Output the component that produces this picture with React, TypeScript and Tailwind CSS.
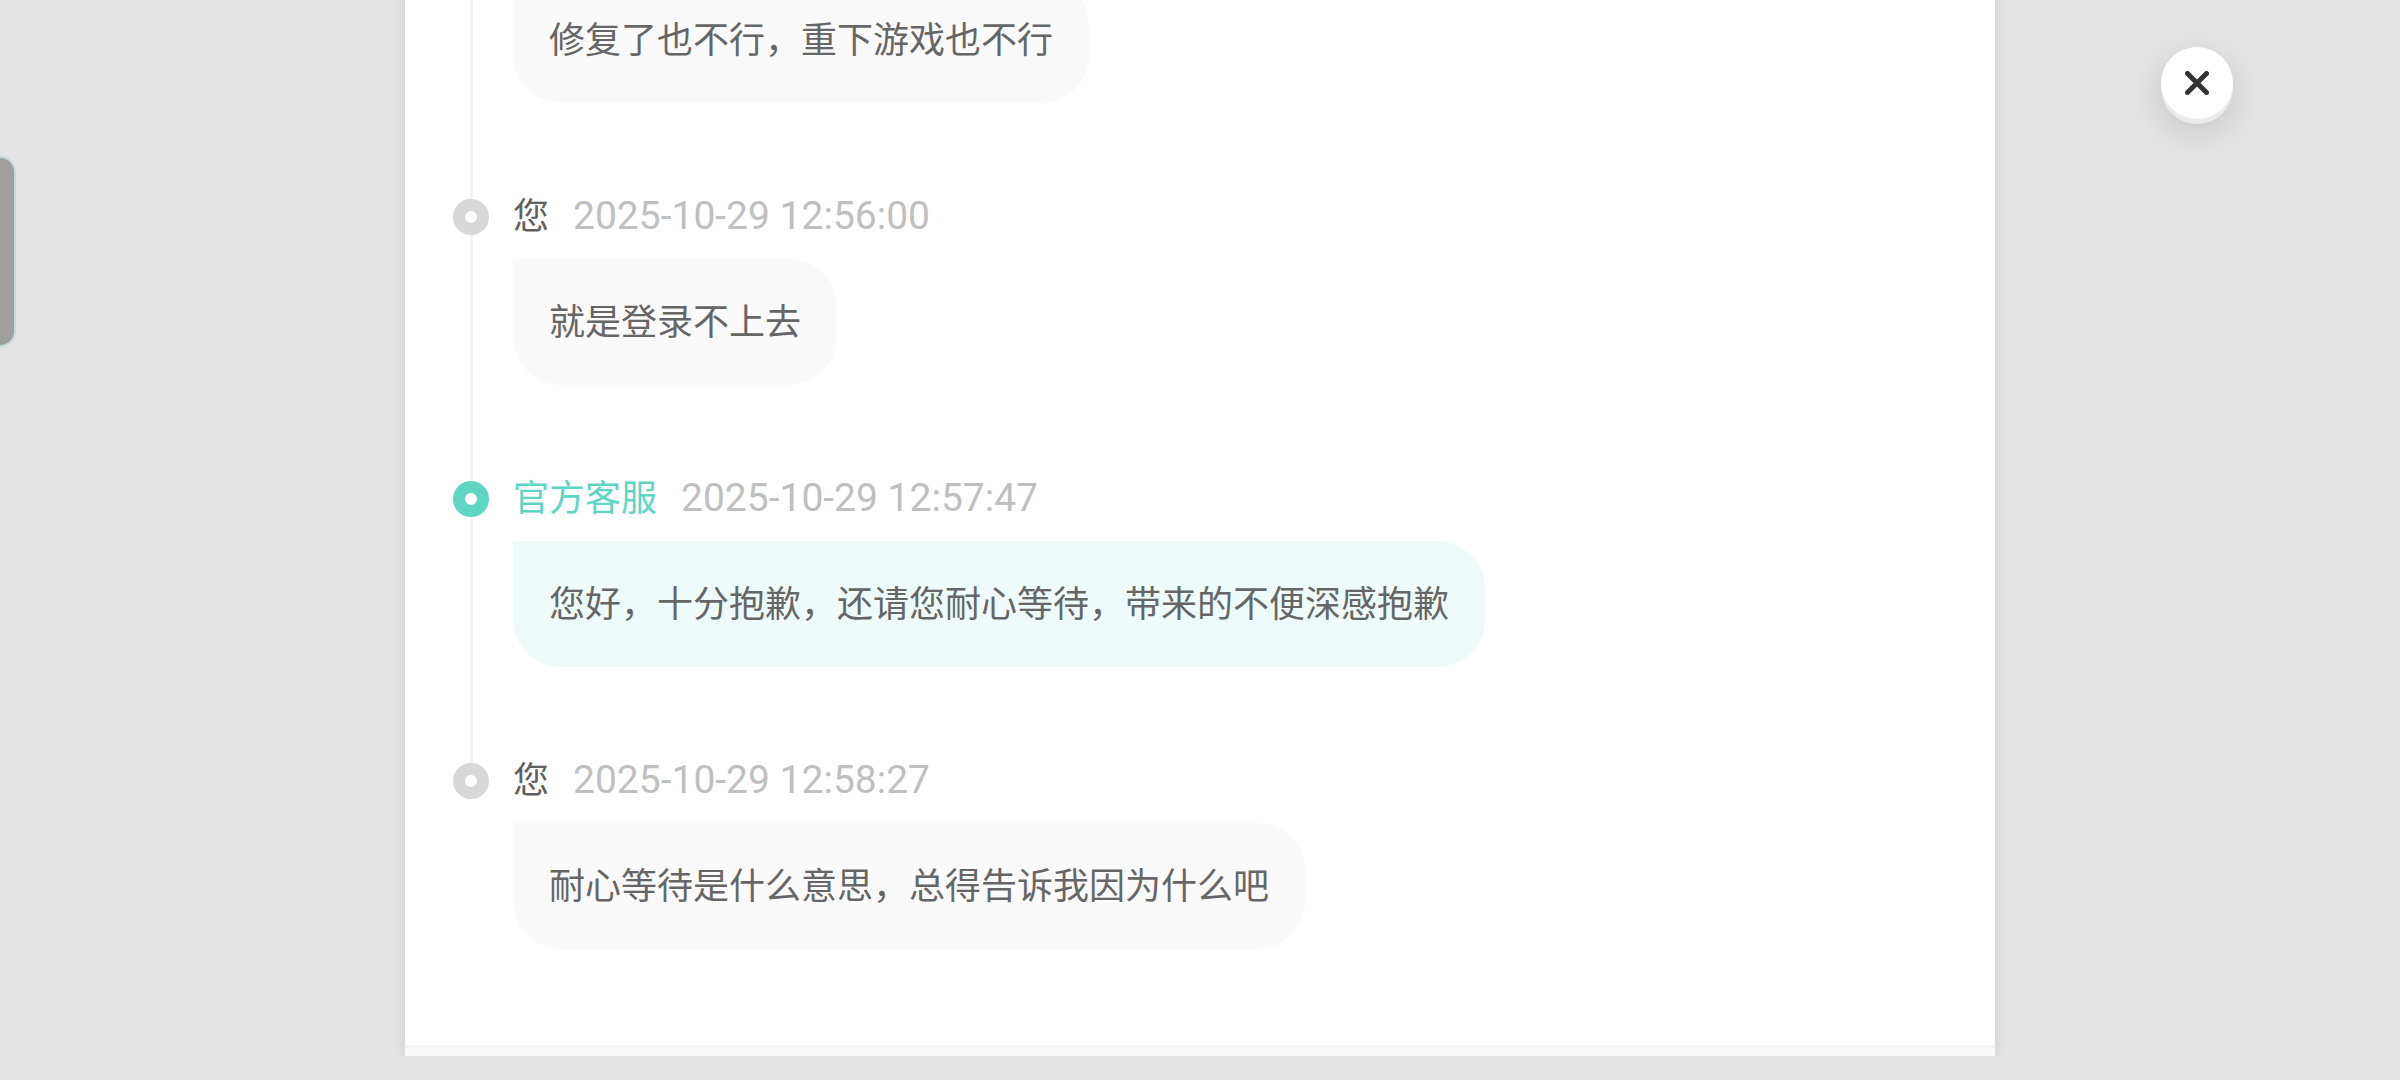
import clsx from "clsx";

interface Entry {
  id: number;
  author?: string;
  time?: string;
  text: string;
  official?: boolean;
}

const entries: Entry[] = [
  { id: 1, text: "修复了也不行，重下游戏也不行" },
  { id: 2, author: "您", time: "2025-10-29 12:56:00", text: "就是登录不上去" },
  {
    id: 3,
    author: "官方客服",
    time: "2025-10-29 12:57:47",
    text: "您好，十分抱歉，还请您耐心等待，带来的不便深感抱歉",
    official: true,
  },
  {
    id: 4,
    author: "您",
    time: "2025-10-29 12:58:27",
    text: "耐心等待是什么意思，总得告诉我因为什么吧",
  },
];

const Rail = ({ entry, isLast }: { entry: Entry; isLast: boolean }) => (
  <div className="flex w-9 shrink-0 flex-col items-center">
    {entry.author && (
      <>
        <div className="h-2.5 w-[3px] bg-[#f4f4f4]" />
        <div
          className={clsx(
            "size-9 shrink-0 rounded-full border-12 bg-white",
            entry.official ? "border-[#5fd6c4]" : "border-[#d8d8d8]"
          )}
        />
      </>
    )}
    {!isLast && <div className="w-[3px] flex-1 bg-[#f4f4f4]" />}
  </div>
);

const TimelineItem = ({ entry, isLast }: { entry: Entry; isLast: boolean }) => (
  <li className="flex gap-6">
    <Rail entry={entry} isLast={isLast} />
    <div className={clsx("flex min-w-0 flex-col items-start", isLast ? "pb-24" : "pb-[86px]")}>
      {entry.author && (
        <div className="mb-4 flex h-[54px] items-start gap-6 whitespace-nowrap">
          <span
            className={clsx(
              "text-[36px] leading-12",
              entry.official ? "text-[#5fd6c4]" : "text-[#606060]"
            )}
          >
            {entry.author}
          </span>
          <time className="font-['Roboto',sans-serif] text-[39px] leading-[54px] text-[#bfbfbf]">
            {entry.time}
          </time>
        </div>
      )}
      <p
        className={clsx(
          "rounded-[48px] rounded-tl-none px-9 pt-[33px] pb-[39px] text-[36px] leading-[54px] text-[#666666]",
          entry.official ? "bg-[#eefbfa]" : "bg-[#fafafa]"
        )}
      >
        {entry.text}
      </p>
    </div>
  </li>
);

export default function App() {
  return (
    <div
      lang="zh-CN"
      className="relative h-screen overflow-hidden bg-[#e4e4e4] pb-6 font-['Noto_Sans_CJK_SC',sans-serif]"
    >
      {/* Ticket history, scrolled to the newest message */}
      <main className="flex h-full flex-col justify-end overflow-hidden">
        <section className="mx-auto w-full max-w-[1590px] bg-white shadow-[0_0_12px_rgba(0,0,0,0.1)]">
          <ol className="px-12">
            {entries.map((entry, i) => (
              <TimelineItem key={entry.id} entry={entry} isLast={i === entries.length - 1} />
            ))}
          </ol>
          <div className="h-[11px] border-t-3 border-[#f4f4f4] bg-[#fafafa]" />
        </section>
      </main>

      {/* Floating side handle */}
      <button
        type="button"
        aria-label="展开"
        className="absolute top-[156px] left-0 h-[191px] w-4 rounded-r-2xl border-2 border-l-0 border-[#c6d9e0] bg-[#9f9f9d]"
      />

      <button
        type="button"
        aria-label="关闭"
        className="absolute top-[47px] right-[167px] flex size-18 items-center justify-center rounded-full bg-white shadow-[0_5px_0_#ebebeb,0_12px_36px_rgba(0,0,0,0.14)]"
      >
        <svg
          viewBox="0 0 24 24"
          className="size-6 stroke-[#333333]"
          strokeWidth="5"
          strokeLinecap="round"
          fill="none"
        >
          <path d="M2.5 2.5 21.5 21.5M21.5 2.5 2.5 21.5" />
        </svg>
      </button>
    </div>
  );
}
